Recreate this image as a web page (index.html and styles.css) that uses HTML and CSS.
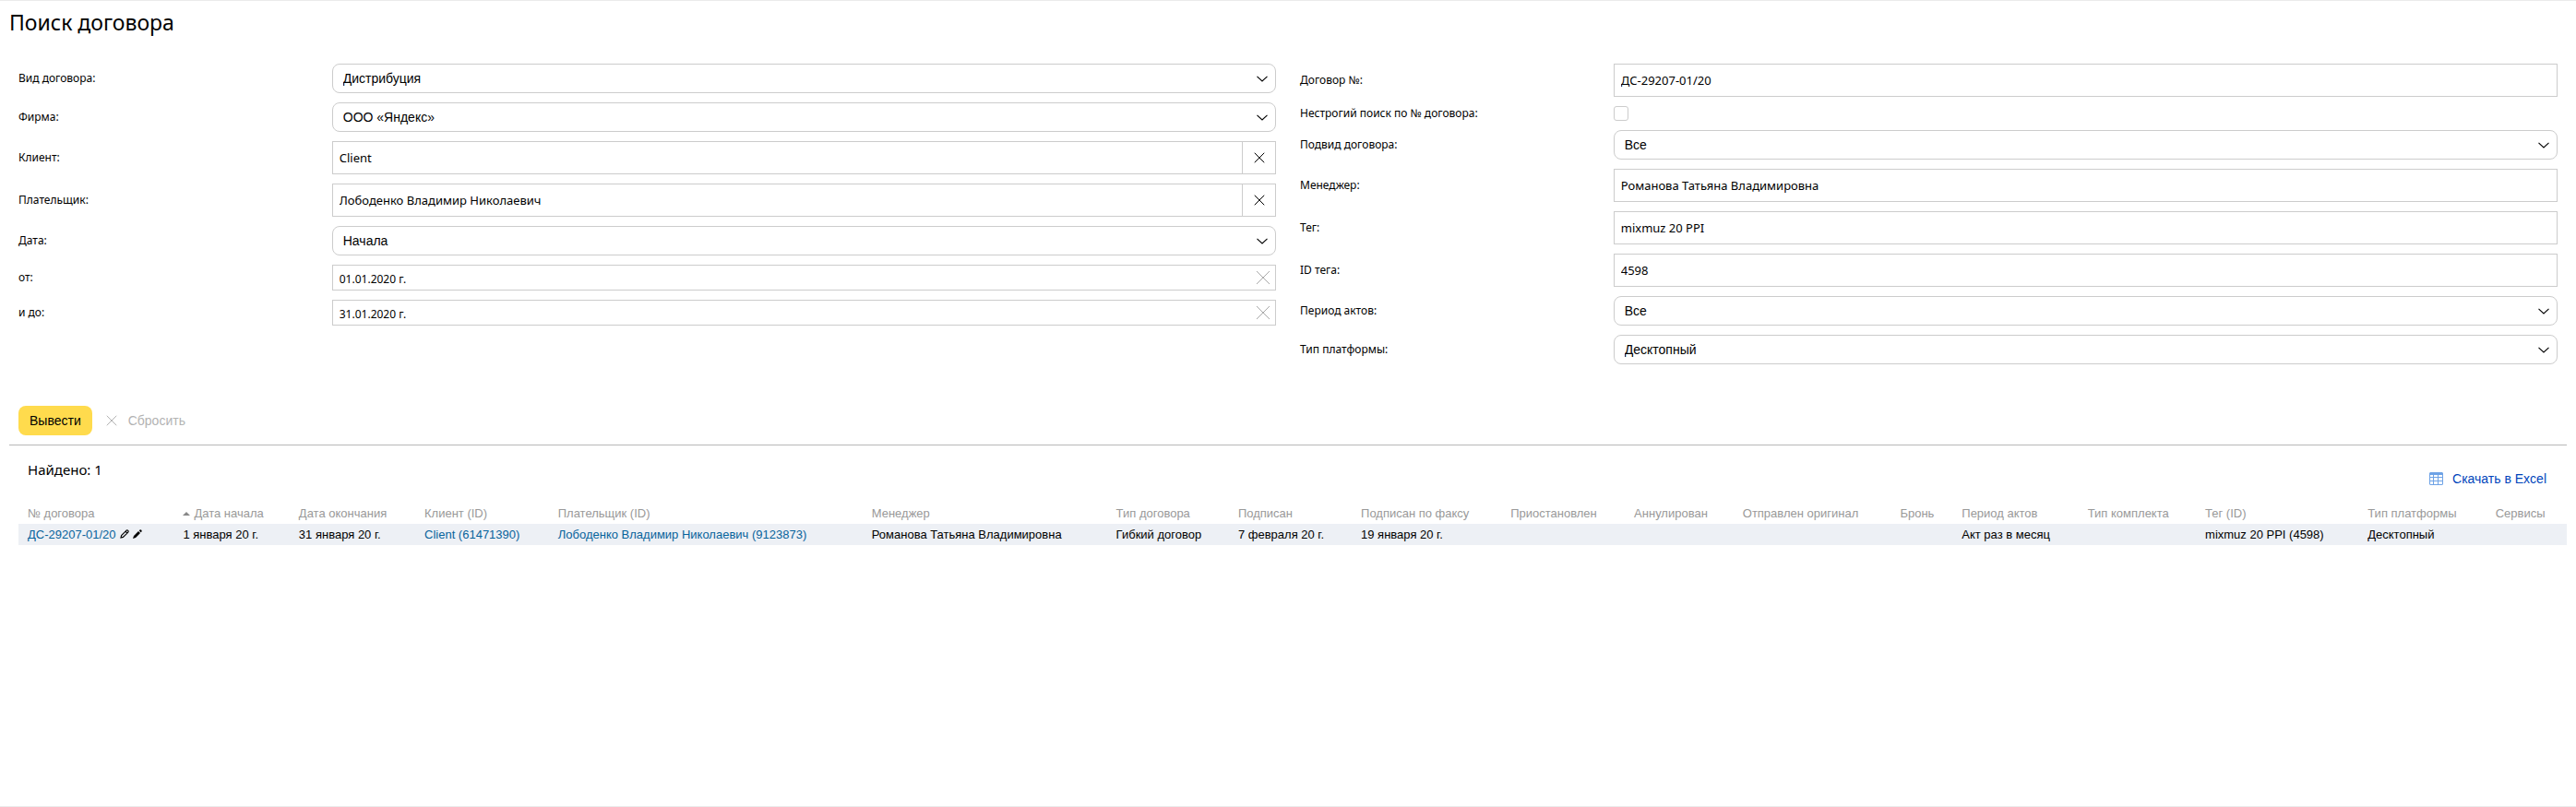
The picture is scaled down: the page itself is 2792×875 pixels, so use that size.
FILE: index.html
```html
<!DOCTYPE html>
<html lang="ru">
<head>
<meta charset="utf-8">
<title>Поиск договора</title>
<link rel="stylesheet" href="styles.css">
</head>
<body>
<svg class="sprite" aria-hidden="true">
  <symbol id="cross" viewBox="0 0 16 16"><path d="M1 1 15 15M15 1 1 15" fill="none" stroke="currentColor" vector-effect="non-scaling-stroke"/></symbol>
  <symbol id="chevron" viewBox="0 0 12 7"><path d="M.5 .8 6 6 11.5 .8" fill="none" stroke="currentColor" stroke-width="1.1"/></symbol>
</svg>
<main class="page">
  <h1 class="page-title">Поиск договора</h1>
  <form class="search">
    <div class="columns">
      <div class="column">
        <div class="row"><label class="label" for="kind">Вид договора:</label><div class="select"><select id="kind"><option>Дистрибуция</option></select><svg class="chevron"><use href="#chevron"/></svg></div></div>
        <div class="row"><label class="label" for="firm">Фирма:</label><div class="select"><select id="firm"><option>ООО «Яндекс»</option></select><svg class="chevron"><use href="#chevron"/></svg></div></div>
        <div class="row"><label class="label" for="client">Клиент:</label><div class="field"><input id="client" type="text" value="Client"><button class="clear" type="button" aria-label="Очистить клиента"><svg class="cross"><use href="#cross"/></svg></button></div></div>
        <div class="row"><label class="label" for="payer">Плательщик:</label><div class="field"><input id="payer" type="text" value="Лободенко Владимир Николаевич"><button class="clear" type="button" aria-label="Очистить плательщика"><svg class="cross"><use href="#cross"/></svg></button></div></div>
        <div class="row"><label class="label" for="date">Дата:</label><div class="select"><select id="date"><option>Начала</option></select><svg class="chevron"><use href="#chevron"/></svg></div></div>
        <div class="row"><label class="label" for="from">от:</label><div class="field field-date"><input id="from" type="text" value="01.01.2020 г."><button class="clear-date" type="button" aria-label="Очистить дату начала"><svg class="cross cross-large"><use href="#cross"/></svg></button></div></div>
        <div class="row"><label class="label" for="to">и до:</label><div class="field field-date"><input id="to" type="text" value="31.01.2020 г."><button class="clear-date" type="button" aria-label="Очистить дату окончания"><svg class="cross cross-large"><use href="#cross"/></svg></button></div></div>
      </div>
      <div class="column">
        <div class="row"><label class="label" for="number">Договор №:</label><div class="field"><input id="number" type="text" value="ДС-29207-01/20"></div></div>
        <div class="row"><label class="label" for="loose">Нестрогий поиск по № договора:</label><input class="checkbox" id="loose" type="checkbox"></div>
        <div class="row"><label class="label" for="subkind">Подвид договора:</label><div class="select"><select id="subkind"><option>Все</option></select><svg class="chevron"><use href="#chevron"/></svg></div></div>
        <div class="row"><label class="label" for="manager">Менеджер:</label><div class="field"><input id="manager" type="text" value="Романова Татьяна Владимировна"></div></div>
        <div class="row"><label class="label" for="tag">Тег:</label><div class="field"><input id="tag" type="text" value="mixmuz 20 PPI"></div></div>
        <div class="row"><label class="label" for="tag-id">ID тега:</label><div class="field"><input id="tag-id" type="text" value="4598"></div></div>
        <div class="row"><label class="label" for="period">Период актов:</label><div class="select"><select id="period"><option>Все</option></select><svg class="chevron"><use href="#chevron"/></svg></div></div>
        <div class="row"><label class="label" for="platform">Тип платформы:</label><div class="select"><select id="platform"><option>Десктопный</option></select><svg class="chevron"><use href="#chevron"/></svg></div></div>
      </div>
    </div>
    <div class="actions">
      <button class="submit" type="submit">Вывести</button>
      <button class="reset" type="reset"><svg class="cross"><use href="#cross"/></svg>Сбросить</button>
    </div>
  </form>
  <section class="results">
    <div class="results-bar">
      <p class="found">Найдено: 1</p>
      <a class="excel" href="#"><svg class="excel-icon" viewBox="0 0 15 14"><path d="M1 0h13l1 1v12l-1 1H1l-1-1V1z" fill="#6fa3e6"/><path d="M1 3h3v2H1zM5 3h4v2H5zM10 3h4v2h-4zM1 6h3v3H1zM5 6h4v3H5zM10 6h4v3h-4zM1 10h3v3H1zM5 10h4v3H5zM10 10h4v3h-4z" fill="#fff"/></svg>Скачать в Excel</a>
    </div>
    <table class="table">
      <colgroup><col style="width:6.1%"><col style="width:4.54%"><col style="width:4.93%"><col style="width:5.24%"><col style="width:12.31%"><col style="width:9.59%"><col style="width:4.79%"><col style="width:4.82%"><col style="width:5.87%"><col style="width:4.85%"><col style="width:4.26%"><col style="width:6.18%"><col style="width:2.42%"><col style="width:4.94%"><col style="width:4.61%"><col style="width:6.38%"><col style="width:5.01%"><col style="width:3.16%"></colgroup>
      <thead><tr><th>№ договора</th><th><svg class="sort" viewBox="0 0 8 4"><path d="M0 4 4 0 8 4z" fill="#888"/></svg>Дата начала</th><th>Дата окончания</th><th>Клиент (ID)</th><th>Плательщик (ID)</th><th>Менеджер</th><th>Тип договора</th><th>Подписан</th><th>Подписан по факсу</th><th>Приостановлен</th><th>Аннулирован</th><th>Отправлен оригинал</th><th>Бронь</th><th>Период актов</th><th>Тип комплекта</th><th>Тег (ID)</th><th>Тип платформы</th><th>Сервисы</th></tr></thead>
      <tbody><tr><td><a href="#">ДС-29207-01/20</a><svg class="pencil" viewBox="0 0 10 10"><path d="M1 9 1.6 6.6 6.8 1.3Q7.9.4 8.8 1.3T8.6 3.3L3.4 8.4zM6 2.2 7.8 4" fill="none" stroke="#000" stroke-width="1.1"/></svg><svg class="pencil" viewBox="0 0 10 10"><path d="M0 10 1 7 6 2 8 4 3 9zM6.7 1.3 7.6.5Q8.6 0 9.3.8T9.5 2.4L8.7 3.3z"/></svg></td><td>1 января 20 г.</td><td>31 января 20 г.</td><td><a href="#">Client (61471390)</a></td><td><a href="#">Лободенко Владимир Николаевич (9123873)</a></td><td>Романова Татьяна Владимировна</td><td>Гибкий договор</td><td>7 февраля 20 г.</td><td>19 января 20 г.</td><td></td><td></td><td></td><td></td><td>Акт раз в месяц</td><td></td><td>mixmuz 20 PPI (4598)</td><td>Десктопный</td><td></td></tr></tbody>
    </table>
  </section>
</main>
</body>
</html>
```
FILE: styles.css
```css
* { box-sizing: border-box; }
body {
  margin: 0;
  min-height: 100vh;
  border-top: 1px solid #ebebeb;
  border-bottom: 1px solid #ebebeb;
  background: #fff;
  color: #000;
  font: 13px/16px "Liberation Sans", Arial, sans-serif;
}
.sprite { display: none; }
.page { padding: 7px 10px; }
.page-title { margin: 0; font: 400 23px/32px "Noto Sans", sans-serif; }
.columns { display: grid; grid-template-columns: 1fr 1fr; gap: 26px; padding: 29px 10px 0; }
.column { display: flex; flex-direction: column; gap: 10px; }
.row { display: grid; grid-template-columns: calc(25% - 1px) 1fr; align-items: center; }
.label { font: 12px/16px "Noto Sans", sans-serif; }
.select { display: grid; align-items: center; }
.select > * { grid-area: 1 / 1; }
.select select {
  width: 100%;
  height: 32px;
  padding: 0 32px 0 11px;
  border: 1px solid #ccc;
  border-radius: 8px;
  background: #fff;
  color: #000;
  font: 14px/16px "Liberation Sans", Arial, sans-serif;
  appearance: none;
}
.chevron { justify-self: end; width: 12px; height: 7px; margin-right: 9px; pointer-events: none; }
.field { display: flex; height: 36px; border: 1px solid #ccc; }
.field input {
  flex: 1;
  min-width: 0;
  padding: 0 7px;
  border: 0;
  background: none;
  color: #000;
  font: 13px/20px "Noto Sans", sans-serif;
}
.field-date { height: 28px; }
.field-date input { padding-top: 3px; font-size: 12px; }
.clear { display: grid; place-items: center; width: 36px; padding: 0; border: 0; border-left: 1px solid #ccc; background: none; color: #000; }
.clear-date { display: grid; place-items: center; width: 26px; padding: 0; border: 0; background: none; color: #aaa; }
.cross { width: 12px; height: 12px; }
.cross-large { width: 16px; height: 16px; }
.checkbox { width: 16px; height: 16px; margin: 0; border: 1px solid #ccc; border-radius: 3px; background: #fff; appearance: none; }
.actions { display: flex; gap: 15px; padding: 45px 10px 10px; border-bottom: 1px solid #b8b8b8; }
.submit, .reset { height: 32px; border: 0; font: 14px/16px "Liberation Sans", Arial, sans-serif; }
.submit { padding: 0 12px; border-radius: 8px; background: #ffdb4d; color: #000; }
.reset { display: flex; align-items: center; gap: 12px; padding: 0; background: none; color: #b3b3b3; }
.results { padding-left: 10px; }
.results-bar { display: flex; justify-content: space-between; padding: 16px 22px 0 10px; }
.found { margin: 0; font: 15px/20px "Noto Sans", sans-serif; }
.excel { display: flex; align-items: center; gap: 10px; margin-top: 12px; color: #04b; font-size: 14px; text-decoration: none; }
.excel-icon { width: 15px; height: 14px; }
.table { width: 100%; margin-top: 18px; border-collapse: collapse; table-layout: fixed; white-space: nowrap; }
.table th, .table td { height: 23px; padding: 0 0 0 10px; text-align: left; font-weight: 400; }
.table th { color: #999; }
.table tbody tr { background: #edf0f5; }
.table a { color: #07639c; text-decoration: none; }
.sort { width: 8px; height: 4px; margin-right: 4px; vertical-align: 2px; }
.pencil { width: 10px; height: 10px; margin-left: 4px; }
```
